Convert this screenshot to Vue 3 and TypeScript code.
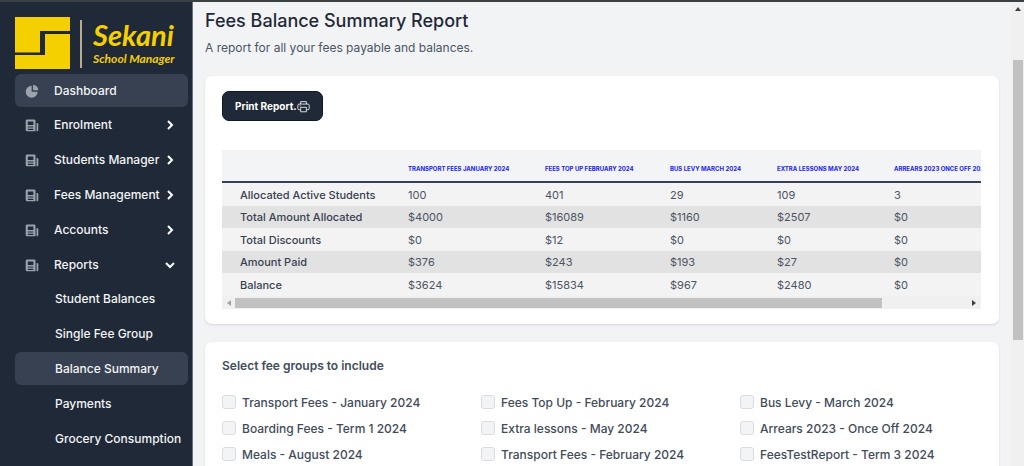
<script setup lang="ts">
import { ref } from 'vue'

interface MenuItem {
  label: string
  open: boolean
}

interface ReportRow {
  label: string
  values: string[]
}

const menu = ref<MenuItem[]>([
  { label: 'Enrolment', open: false },
  { label: 'Students Manager', open: false },
  { label: 'Fees Management', open: false },
  { label: 'Accounts', open: false },
  { label: 'Reports', open: true },
])

const reportLinks: string[] = [
  'Student Balances',
  'Single Fee Group',
  'Balance Summary',
  'Payments',
  'Grocery Consumption',
]
const currentLink = ref('Balance Summary')

const feeColumns: string[] = [
  'Transport Fees January 2024',
  'Fees Top Up February 2024',
  'Bus Levy March 2024',
  'Extra Lessons May 2024',
  'Arrears 2023 Once Off 2024',
]

const rows: ReportRow[] = [
  { label: 'Allocated Active Students', values: ['100', '401', '29', '109', '3'] },
  { label: 'Total Amount Allocated', values: ['$4000', '$16089', '$1160', '$2507', '$0'] },
  { label: 'Total Discounts', values: ['$0', '$12', '$0', '$0', '$0'] },
  { label: 'Amount Paid', values: ['$376', '$243', '$193', '$27', '$0'] },
  { label: 'Balance', values: ['$3624', '$15834', '$967', '$2480', '$0'] },
]

const feeGroups: string[] = [
  'Transport Fees - January 2024',
  'Fees Top Up - February 2024',
  'Bus Levy - March 2024',
  'Boarding Fees - Term 1 2024',
  'Extra lessons - May 2024',
  'Arrears 2023 - Once Off 2024',
  'Meals - August 2024',
  'Transport Fees - February 2024',
  'FeesTestReport - Term 3 2024',
]
const selected = ref<string[]>([])
</script>

<template>
  <div class="page">
    <aside class="sidebar">
      <div class="brand">
        <svg class="brand-mark" viewBox="0 0 55 52" aria-hidden="true">
          <path d="M0 0H55V14H25V35.500H0Z" />
          <path d="M30 17H55V52H0V38H30Z" />
        </svg>
        <span class="brand-rule"></span>
        <div class="brand-text">
          <span class="brand-name">Sekani</span>
          <span class="brand-sub">School Manager</span>
        </div>
      </div>
      <nav class="nav">
        <a class="item active" href="#">
          <svg class="item-icon" viewBox="0 0 20 20" aria-hidden="true">
            <path d="M1 11a8.500 8.500 0 0 1 8.500-8.500V11H18a8.500 8.500 0 1 1-17 0Z" />
            <path d="M11.500 1A8 8 0 0 1 19 9H11.500Z" />
          </svg>
          <span>Dashboard</span>
        </a>
        <div class="nav-group">
          <button
            v-for="item in menu"
            :key="item.label"
            class="item"
            type="button"
            :aria-expanded="item.open"
            @click="item.open = !item.open"
          >
            <svg class="item-icon" viewBox="0 0 20 20" aria-hidden="true">
              <path
                fill-rule="evenodd"
                d="M3 2h10a2 2 0 0 1 2 2v15H3a2 2 0 0 1-2-2V4a2 2 0 0 1 2-2Zm1 3v5h8V5H4Zm0 7v1.500h8V12H4Zm0 3.500V17h8v-1.500H4Z"
              />
              <path d="M16.500 7H17a2 2 0 0 1 2 2v8a2 2 0 0 1-2.500 1.900Z" />
            </svg>
            <span class="grow">{{ item.label }}</span>
            <svg class="chevron" viewBox="0 0 12 12" aria-hidden="true">
              <path v-if="item.open" d="M2 4l4 4 4-4" />
              <path v-else d="M4 2l4 4-4 4" />
            </svg>
          </button>
        </div>
        <div v-show="menu[4].open" class="nav-group">
          <a
            v-for="link in reportLinks"
            :key="link"
            class="item sub"
            :class="{ active: link === currentLink }"
            href="#"
            @click.prevent="currentLink = link"
          >{{ link }}</a>
        </div>
      </nav>
    </aside>

    <main class="content">
      <header>
        <h1>Fees Balance Summary Report</h1>
        <p class="lead">A report for all your fees payable and balances.</p>
      </header>

      <section class="card">
        <button class="print" type="button">
          <span>Print Report.</span>
          <svg viewBox="0 0 16 16" aria-hidden="true">
            <path d="M4.500 5V2h7v3M4 12H2.700A1.700 1.700 0 0 1 1 10.300V6.700A1.700 1.700 0 0 1 2.700 5h10.600A1.700 1.700 0 0 1 15 6.700v3.600a1.700 1.700 0 0 1-1.700 1.700H12M4.500 9h7v5.500h-7ZM3 7.200h1.500" />
          </svg>
        </button>
        <div class="table-box">
          <div class="table-clip">
            <table>
              <colgroup>
                <col class="c-label" />
                <col class="c-1" />
                <col class="c-2" />
                <col class="c-3" />
                <col class="c-4" />
                <col class="c-5" />
              </colgroup>
              <thead>
                <tr>
                  <th></th>
                  <th v-for="name in feeColumns" :key="name" scope="col">{{ name }}</th>
                </tr>
              </thead>
              <tbody>
                <tr v-for="row in rows" :key="row.label">
                  <th scope="row">{{ row.label }}</th>
                  <td v-for="(value, i) in row.values" :key="i">{{ value }}</td>
                </tr>
              </tbody>
            </table>
          </div>
          <div class="hbar" aria-hidden="true">
            <svg class="left" viewBox="0 0 4 6"><path d="M4 0v6L0 3Z" /></svg>
            <span class="hrail"><span class="hthumb"></span></span>
            <svg class="right" viewBox="0 0 4 6"><path d="M0 0v6l4-3Z" /></svg>
          </div>
        </div>
      </section>

      <section class="card groups">
        <h2>Select fee groups to include</h2>
        <div class="group-grid">
          <label v-for="group in feeGroups" :key="group">
            <input v-model="selected" type="checkbox" :value="group" />
            <span>{{ group }}</span>
          </label>
        </div>
      </section>
    </main>

    <div class="vbar" aria-hidden="true">
      <svg viewBox="0 0 6 4"><path d="M0 4h6L3 0Z" /></svg>
      <span class="vthumb"></span>
    </div>
  </div>
</template>

<style>
body {
  margin: 0;
  overflow: hidden;
}
</style>

<style scoped>
* {
  box-sizing: border-box;
}
.page {
  display: grid;
  grid-template-columns: 193px minmax(0, 1fr) 13px;
  grid-template-rows: minmax(0, 1fr);
  height: 100vh;
  overflow: hidden;
  border-top: 2px solid #3b4043;
  background: #f2f3f5;
  color: #4b5563;
  font-family: Inter, "Liberation Sans", sans-serif;
}
button {
  font-family: inherit;
}
.sidebar {
  min-height: 0;
  overflow: hidden;
  padding: 15px 4px 0 15px;
  border-right: 1px solid #6b7280;
  background: #1f2937;
}
.brand {
  display: flex;
  height: 57px;
}
.brand-mark {
  width: 55px;
  height: 52px;
  fill: #f4d000;
}
.brand-rule {
  width: 2px;
  height: 48px;
  margin: 3px 11px 0 10px;
  background: #b5ae8c;
}
.brand-text {
  display: flex;
  flex-direction: column;
  color: #f4d000;
  font-family: Lato, sans-serif;
  font-style: italic;
  font-weight: 700;
  white-space: nowrap;
}
.brand-name {
  font-size: 29px;
  line-height: 36px;
}
.brand-sub {
  font-size: 12px;
  line-height: 12px;
}
.nav {
  display: flex;
  flex-direction: column;
  gap: 1px;
}
.nav-group {
  display: flex;
  flex-direction: column;
  gap: 2px;
}
.item {
  display: flex;
  flex: none;
  align-items: center;
  height: 33px;
  padding: 0 12px 0 10px;
  border: 0;
  border-radius: 6px;
  background: transparent;
  color: #f3f4f6;
  font-size: 12px;
  font-weight: 500;
  line-height: 18px;
  text-align: left;
  text-decoration: none;
  white-space: nowrap;
}
.item.active {
  background: #374151;
}
.item.sub {
  padding-left: 40px;
}
.item-icon {
  width: 14px;
  height: 14px;
  margin-right: 15px;
  fill: #9ca3af;
}
.grow {
  flex: 1;
}
.chevron {
  width: 12px;
  height: 12px;
  fill: none;
  stroke: #fff;
  stroke-width: 2;
}
.content {
  min-width: 0;
  overflow: hidden;
  padding: 7px 12px 0;
}
h1 {
  margin: 0;
  color: #1f2937;
  font-size: 18px;
  font-weight: 500;
  line-height: 24px;
}
.lead {
  margin: 6px 0 19px;
  font-size: 12px;
  line-height: 18px;
}
.card {
  padding: 15px 18px 15px 17px;
  border-radius: 7px;
  background: #fff;
  box-shadow: 0 1px 2px #d1d5db;
}
.print {
  display: flex;
  align-items: center;
  height: 30px;
  padding: 0 12px;
  border: 1px solid #111827;
  border-radius: 7px;
  background: #1f2937;
  color: #fff;
  font-size: 10px;
  font-weight: 700;
}
.print svg {
  width: 13px;
  height: 13px;
  fill: none;
  stroke: #fff;
}
.table-box {
  margin-top: 29px;
}
.table-clip {
  overflow: hidden;
}
table {
  width: 850px;
  border-collapse: separate;
  border-spacing: 0;
  table-layout: fixed;
  font-size: 11px;
  line-height: 16px;
}
.c-label { width: 168px; }
.c-1 { width: 137px; }
.c-2 { width: 125px; }
.c-3 { width: 107px; }
.c-4 { width: 117px; }
th,
td {
  padding: 0 0 0 18px;
  text-align: left;
  white-space: nowrap;
}
thead th {
  height: 33px;
  padding-top: 6px;
  border-bottom: 2px solid #374151;
  background: #f3f4f6;
  color: #2020ff;
  font-size: 6px;
  font-weight: 700;
  text-transform: uppercase;
}
tbody th {
  color: #374151;
  font-weight: 500;
}
tbody tr {
  height: 23px;
  background: #f3f3f3;
}
tbody tr:nth-child(even) {
  height: 22px;
  background: #e2e2e2;
}
.hbar {
  display: flex;
  align-items: center;
  justify-content: space-between;
  height: 13px;
  padding: 0 5px;
  background: #f0f0f0;
}
.hbar svg {
  width: 4px;
  height: 6px;
}
.left {
  fill: #a3a3a3;
}
.right {
  fill: #404040;
}
.hrail {
  flex: 1;
  margin: 0 2px 0 4px;
}
.hthumb {
  display: block;
  width: 88%;
  height: 10px;
  background: #c1c1c1;
}
.groups {
  margin-top: 18px;
}
h2 {
  margin: 0 0 14px;
  color: #414b5a;
  font-size: 12px;
  font-weight: 600;
  line-height: 18px;
}
.group-grid {
  display: grid;
  grid-template-columns: repeat(3, minmax(0, 1fr));
  column-gap: 18px;
}
label {
  display: flex;
  align-items: center;
  gap: 6px;
  height: 26px;
  color: #414b5a;
  font-size: 12px;
  font-weight: 500;
  white-space: nowrap;
}
input {
  width: 14px;
  height: 14px;
  margin: 0;
  appearance: none;
  border: 1px solid #d9dce1;
  border-radius: 3px;
  background: #f3f4f6;
}
input:checked {
  background: #1f2937;
}
.vbar {
  display: flex;
  flex-direction: column;
  align-items: center;
  padding-top: 5px;
  background: #f0f0f0;
}
.vbar svg {
  width: 6px;
  height: 4px;
  fill: #404040;
}
.vthumb {
  width: 10px;
  height: 61%;
  margin-top: 49px;
  background: #c1c1c1;
}
</style>
